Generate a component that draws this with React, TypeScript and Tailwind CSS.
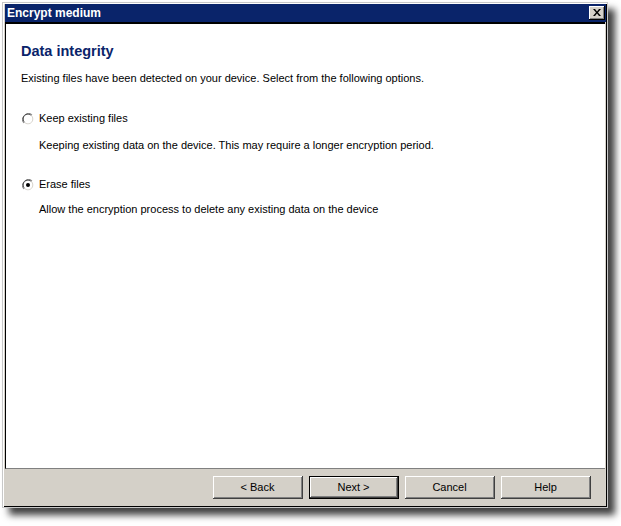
import React from "react";

const font = { fontFamily: '"Liberation Sans", Arial, sans-serif' };

function Radio({ checked }: { checked?: boolean }) {
  return (
    <svg width="12" height="12" viewBox="0 0 12 12" className="shrink-0">
      <path d="M10.2 1.8 A6 6 0 0 0 1.8 10.2" fill="none" stroke="#808080" strokeWidth="1" />
      <path d="M9.4 2.6 A4.8 4.8 0 0 0 2.6 9.4" fill="none" stroke="#404040" strokeWidth="1" />
      <path d="M1.8 10.2 A6 6 0 0 0 10.2 1.8" fill="none" stroke="#ffffff" strokeWidth="1" />
      <path d="M2.6 9.4 A4.8 4.8 0 0 0 9.4 2.6" fill="none" stroke="#d4d0c8" strokeWidth="1" />
      <circle cx="6" cy="6" r="4.2" fill="#ffffff" />
      {checked && <circle cx="6" cy="6" r="2" fill="#000000" />}
    </svg>
  );
}

function Btn({ label, def }: { label: string; def?: boolean }) {
  return (
    <div className={"w-[90px] h-[23px] " + (def ? "border border-black" : "")}>
      <div className="w-full h-full border-r border-b border-[#404040]">
        <div className="w-full h-full border-l border-t border-white">
          <div className="w-full h-full border-r border-b border-[#808080] flex items-center justify-center text-[11px] text-black bg-[#d4d0c8]">
            {label}
          </div>
        </div>
      </div>
    </div>
  );
}

export default function App() {
  return (
    <div className="w-[621px] h-[526px] bg-white pt-[2px] pl-[2px]" style={font}>
      <div className="w-[606px] h-[506px] border border-[#c8c8c8] bg-[#d4d0c8] shadow-[7px_7px_7px_rgba(0,0,0,0.75)] flex flex-col">
        <div className="border-l border-t border-white flex-1 flex flex-col">
          <div className="border-r border-b border-black flex-1 flex flex-col pl-px">
            <div className="h-[18px] bg-[#0a246a] flex items-center justify-between pl-[2px] pr-[1px]">
              <span className="text-white font-bold text-[12px] leading-none">Encrypt medium</span>
              <div className="w-[16px] h-[14px] border-r border-b border-black">
                <div className="w-full h-full border-l border-t border-white">
                  <div className="w-full h-full border-r border-b border-[#808080] bg-[#d4d0c8] flex items-center justify-center">
                    <svg width="8" height="7" viewBox="0 0 8 7">
                      <path d="M0 0h2l2 2.5L6 0h2L5 3.5 8 7H6L4 4.5 2 7H0l3-3.5z" fill="#000" />
                    </svg>
                  </div>
                </div>
              </div>
            </div>
            <div className="h-[447px] bg-white border-t-2 border-l border-black border-b border-b-[#808080] mr-[1px] pl-[15px] pt-[18px]">
              <div className="text-[#0a246a] font-bold text-[14.5px] leading-[18px]">Data integrity</div>
              <div className="text-[11px] text-black mt-[12px] leading-[13px]">
                Existing files have been detected on your device. Select from the following options.
              </div>
              <div className="flex items-center gap-[5px] mt-[27px] pl-[1px]">
                <Radio />
                <span className="text-[11px] leading-[13px]">Keep existing files</span>
              </div>
              <div className="text-[11px] leading-[13px] pl-[18px] mt-[14px]">
                Keeping existing data on the device. This may require a longer encryption period.
              </div>
              <div className="flex items-center gap-[5px] mt-[26px] pl-[1px]">
                <Radio checked />
                <span className="text-[11px] leading-[13px]">Erase files</span>
              </div>
              <div className="text-[11px] leading-[13px] pl-[18px] mt-[12px]">
                Allow the encryption process to delete any existing data on the device
              </div>
            </div>
            <div className="flex-1 flex items-start justify-end gap-[6px] pt-[7px] pr-[15px]">
              <Btn label="< Back" />
              <Btn label="Next >" def />
              <Btn label="Cancel" />
              <Btn label="Help" />
            </div>
          </div>
        </div>
      </div>
    </div>
  );
}
